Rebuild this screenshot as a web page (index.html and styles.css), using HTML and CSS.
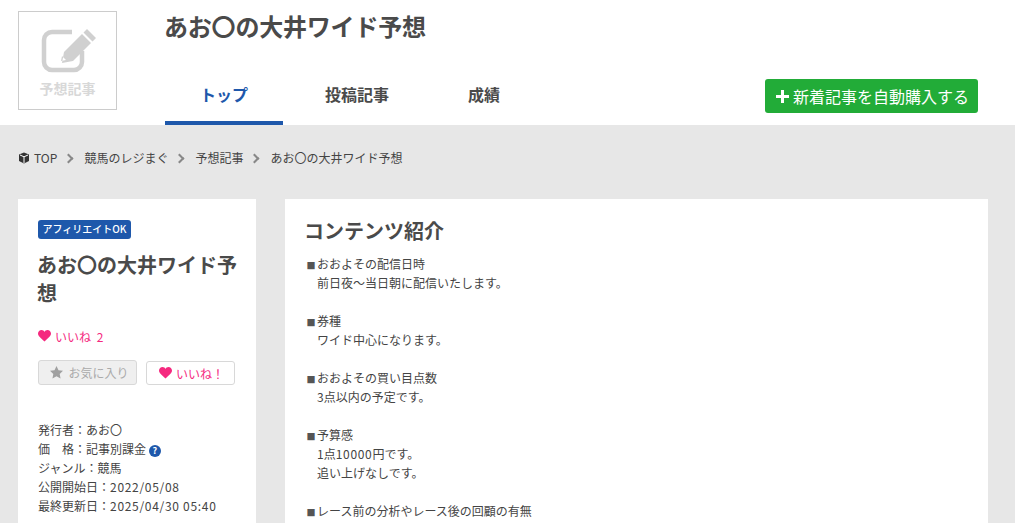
FILE: index.html
```html
<!DOCTYPE html>
<html lang="ja">
<head>
<meta charset="utf-8">
<title>あお〇の大井ワイド予想</title>
<link rel="stylesheet" href="styles.css">
</head>
<body>
<header class="header">
  <div class="logo-box">
    <svg class="logo-icon" viewBox="0 0 56 44" width="56" height="44" aria-hidden="true">
      <path class="logo-frame" d="M31 3H11a8 8 0 0 0-8 8v22a8 8 0 0 0 8 8h22a8 8 0 0 0 8-8V22"/>
      <path class="logo-pen" d="M46 0l9 9-3.500 3.500-9-9zM41 5l9 9-18 18-11 2 2-11zM21 27l-1 5 5-1z"/>
    </svg>
    <span class="logo-text">予想記事</span>
  </div>
  <div class="header-main">
    <h1 class="site-title">あお〇の大井ワイド予想</h1>
    <div class="nav-row">
      <nav class="tabs">
        <a class="tab tab-active">トップ</a>
        <a class="tab">投稿記事</a>
        <a class="tab tab-last">成績</a>
      </nav>
      <a class="buy-btn"><span class="plus"></span>新着記事を自動購入する</a>
    </div>
  </div>
</header>
<main class="page">
  <div class="crumbs">
    <svg class="cube" viewBox="0 0 12 12" width="12" height="12" aria-hidden="true"><path d="M6 .5l5 2v6.500l-5 2.500-5-2.500V2.500z"/><path class="cube-line" d="M2 3l4 1.800L10 3M6 4.800V11"/></svg>
    <span>TOP</span><i class="chev"></i>
    <span>競馬のレジまぐ</span><i class="chev"></i>
    <span>予想記事</span><i class="chev"></i>
    <span>あお〇の大井ワイド予想</span>
  </div>
  <div class="columns">
    <aside class="side">
      <span class="badge">アフィリエイトOK</span>
      <h2 class="side-title">あお〇の大井ワイド予想</h2>
      <p class="like-count"><svg class="heart" viewBox="0 0 24 22"><path d="M12 21C5 15 0 11 0 6.500 0 3 3 0 6.500 0 9 0 11 1.300 12 3.500 13 1.300 15 0 17.500 0 21 0 24 3 24 6.500 24 11 19 15 12 21z"/></svg>いいね 2</p>
      <div class="actions">
        <a class="btn btn-fav"><svg class="star" viewBox="0 0 24 24"><path d="M12 0l3.700 7.800 8.300 1.100-6.100 5.800 1.600 8.500L12 19l-7.500 4.200 1.600-8.500L0 8.900l8.300-1.100z"/></svg>お気に入り</a>
        <a class="btn btn-like"><svg class="heart" viewBox="0 0 24 22"><path d="M12 21C5 15 0 11 0 6.500 0 3 3 0 6.500 0 9 0 11 1.300 12 3.500 13 1.300 15 0 17.500 0 21 0 24 3 24 6.500 24 11 19 15 12 21z"/></svg>いいね！</a>
      </div>
      <ul class="meta">
        <li>発行者：あお〇</li>
        <li>価　格：記事別課金 <span class="help">?</span></li>
        <li>ジャンル：競馬</li>
        <li>公開開始日：<span class="num">2022/05/08</span></li>
        <li>最終更新日：<span class="num">2025/04/30 05:40</span></li>
      </ul>
    </aside>
    <section class="content">
      <h2 class="content-title">コンテンツ紹介</h2>
      <p class="para"><span class="sq">■</span>おおよその配信日時<br>　前日夜～当日朝に配信いたします。</p>
      <p class="para"><span class="sq">■</span>券種<br>　ワイド中心になります。</p>
      <p class="para"><span class="sq">■</span>おおよその買い目点数<br>　3点以内の予定です。</p>
      <p class="para"><span class="sq">■</span>予算感<br>　1点<span class="num">10000</span>円です。<br>　追い上げなしです。</p>
      <p class="para"><span class="sq">■</span>レース前の分析やレース後の回顧の有無</p>
    </section>
  </div>
</main>
</body>
</html>
```
FILE: styles.css
```css
* { box-sizing: border-box; }
html, body { margin: 0; height: 523px; overflow: hidden; }
body {
  font-family: "Noto Sans CJK JP", "Noto Sans", sans-serif;
  font-size: 12px;
  color: #444;
  background: #e7e7e7;
}
h1, h2, p, ul { margin: 0; padding: 0; }
ul { list-style: none; }

.header {
  display: flex;
  height: 125px;
  background: #fff;
  padding: 11px 37px 0 18px;
  gap: 48px;
}
.logo-box {
  width: 99px;
  height: 99px;
  border: 1px solid #ccc;
  display: flex;
  flex-direction: column;
  align-items: center;
  padding-top: 17px;
}
.logo-icon { margin-left: 3px; }
.logo-frame { fill: none; stroke: #d0d0d0; stroke-width: 4.5; }
.logo-pen { fill: #d0d0d0; fill-rule: evenodd; }
.logo-text {
  margin-top: 5px;
  font-size: 14px;
  line-height: 20px;
  font-weight: 700;
  color: #d8d8d8;
}
.header-main {
  flex: 1;
  display: flex;
  flex-direction: column;
  justify-content: space-between;
}
.site-title {
  margin-left: -1px;
  font-size: 24px;
  line-height: 30px;
  font-weight: 700;
  letter-spacing: -.2px;
  color: #4a4a4a;
}
.nav-row {
  display: flex;
  justify-content: space-between;
  align-items: flex-start;
}
.tabs { display: flex; gap: 7px; }
.tab {
  display: block;
  height: 55px;
  padding: 8px 35px 0;
  font-size: 16px;
  line-height: 32px;
  font-weight: 700;
  color: #4a4a4a;
}
.tab-active {
  color: #1e58ab;
  border-bottom: 4px solid #1e58ab;
}
.tab-last { margin-left: 2px; }
.buy-btn {
  display: flex;
  align-items: center;
  width: 213px;
  height: 34px;
  margin-top: 9px;
  padding-left: 11px;
  background: #22ac38;
  border-radius: 3px;
  color: #fff;
  font-size: 16px;
}
.plus {
  width: 13px;
  height: 13px;
  margin-right: 4px;
  background:
    linear-gradient(#fff, #fff) center / 13px 3px no-repeat,
    linear-gradient(#fff, #fff) center / 3px 13px no-repeat;
}

.page { padding: 0 27px 0 18px; }
.crumbs {
  display: flex;
  align-items: center;
  height: 66px;
  margin-bottom: 8px;
  line-height: 18px;
  color: #444;
}
.cube { margin-right: 4px; fill: #333; }
.cube-line { fill: none; stroke: #fff; stroke-width: 1; }
.chev {
  display: block;
  width: 7px;
  height: 7px;
  margin: 0 12px 0 8px;
  border-top: 2px solid #888;
  border-right: 2px solid #888;
  transform: rotate(45deg);
}
.columns {
  display: flex;
  gap: 29px;
  align-items: stretch;
}
.side {
  width: 238px;
  height: 400px;
  background: #fff;
  padding: 21px 18px 21px 20px;
  flex: none;
}
.badge {
  display: block;
  width: 93px;
  height: 19px;
  background: #1e58ab;
  border-radius: 3px;
  color: #fff;
  font-size: 10px;
  font-weight: 500;
  line-height: 17px;
  text-align: center;
  white-space: nowrap;
}
.side-title {
  margin: 12px 0 0 -1px;
  font-size: 20px;
  line-height: 28px;
  font-weight: 700;
  color: #4a4a4a;
}
.like-count {
  display: flex;
  align-items: center;
  margin-top: 19px;
  height: 20px;
  font-size: 12px;
  word-spacing: 3px;
  color: #f5297f;
}
.heart { width: 13px; height: 12px; margin-right: 4px; fill: #f5297f; flex: none; }
.actions {
  display: flex;
  align-items: flex-end;
  gap: 9px;
  margin-top: 14px;
}
.btn {
  display: flex;
  align-items: center;
  justify-content: center;
  border-radius: 3px;
  font-size: 12px;
  white-space: nowrap;
}
.btn-fav {
  width: 99px;
  height: 25px;
  padding-left: 4px;
  background: #efefef;
  border: 1px solid #d8d8d8;
  color: #aaa;
}
.star { width: 13px; height: 13px; margin-right: 5px; fill: #a0a0a0; }
.btn-like {
  width: 89px;
  height: 24px;
  padding-left: 2px;
  background: #fff;
  border: 1px solid #d8d8d8;
  color: #f5297f;
}
.meta { margin-top: 35px; line-height: 19px; }
.num { letter-spacing: .7px; }
.help {
  display: inline-block;
  width: 12px;
  height: 12px;
  border-radius: 50%;
  background: #1e58ab;
  color: #fff;
  font-size: 9px;
  line-height: 12px;
  font-weight: 700;
  text-align: center;
}
.content {
  width: 703px;
  height: 400px;
  background: #fff;
  padding: 17px 20px;
}
.content-title {
  margin: 0 0 8px -1px;
  font-size: 20px;
  line-height: 30px;
  font-weight: 700;
  color: #4a4a4a;
}
.para { line-height: 19px; margin-bottom: 19px; }
.sq {
  display: inline-block;
  width: 12px;
  font-size: 9px;
  line-height: 1;
  text-align: center;
  color: #555;
}
```
